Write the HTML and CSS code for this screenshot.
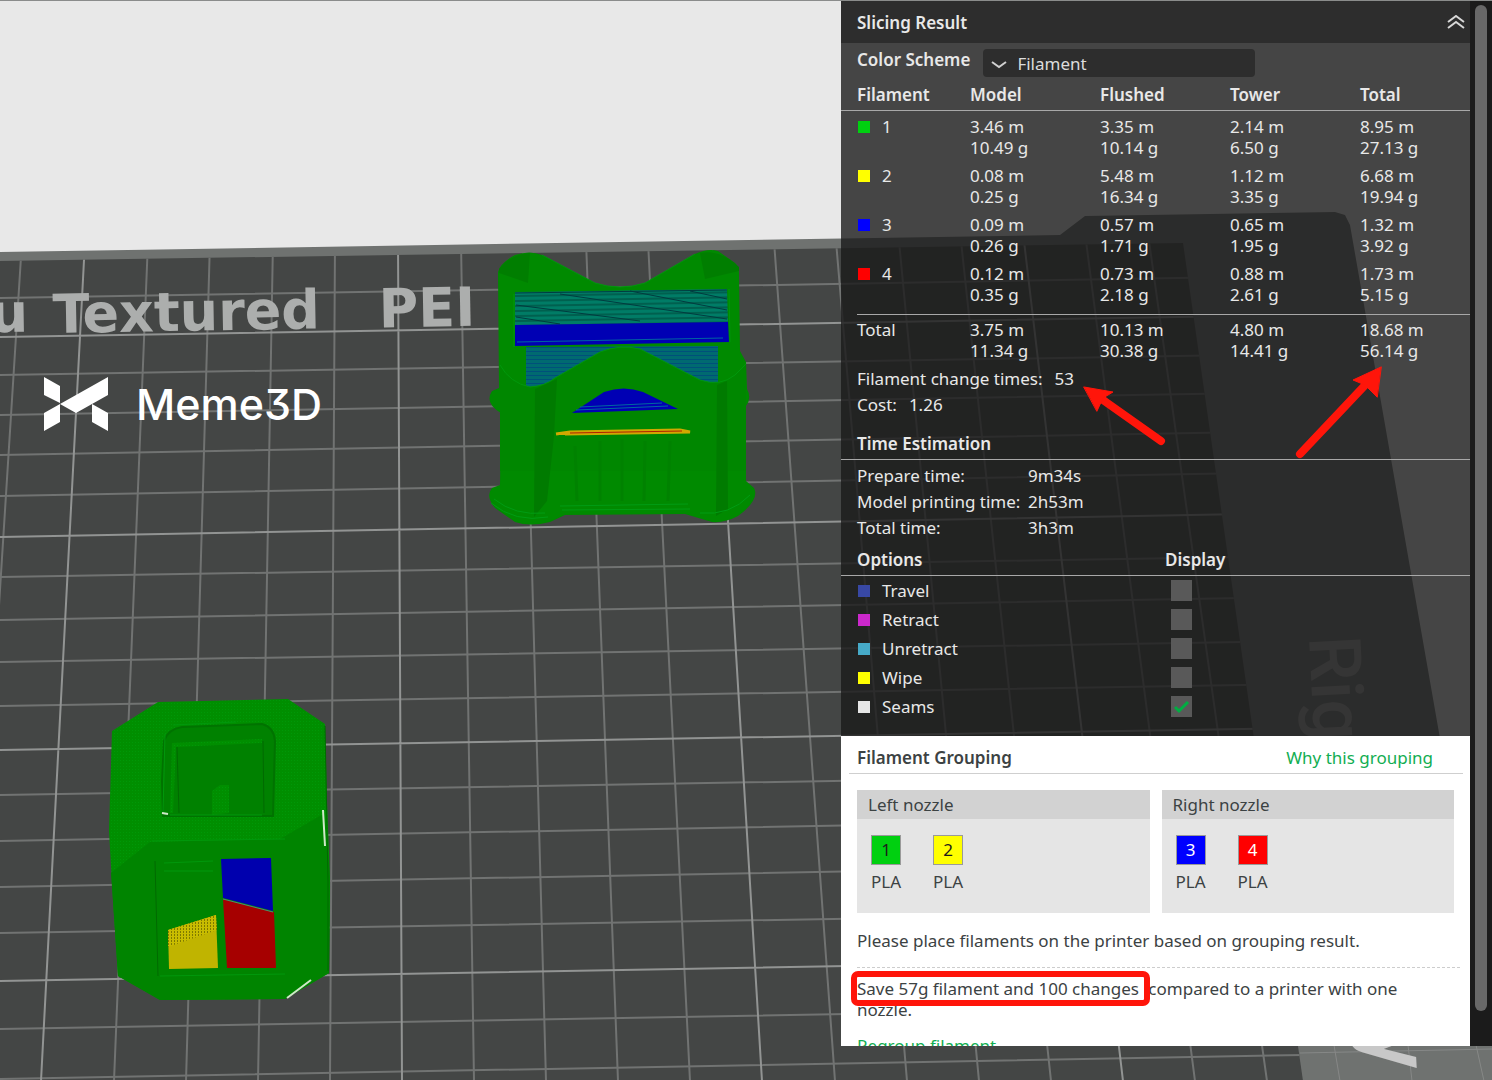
FILE: index.html
```html
<!DOCTYPE html>
<html lang="en">
  <head>
    <meta charset="UTF-8" />
    <meta name="viewport" content="width=device-width, initial-scale=1.0" />
    <title>Slicing Result</title>
    <link rel="stylesheet" href="styles.css">
  </head>
  <body>
    <div class="app">
      <!-- 3D view -->
      <svg class="scene" viewBox="0 0 1492 1080" preserveAspectRatio="xMaxYMin slice" aria-hidden="true">
        <defs>
          <clipPath id="plate-clip">
            <polygon points="0,260 1183,242 1303,1080 0,1080" />
          </clipPath>
          <pattern id="teal-lines" width="120" height="5" patternUnits="userSpaceOnUse" patternTransform="rotate(-1)">
            <rect width="120" height="5" fill="#007c66" />
            <rect y="3" width="120" height="2" fill="#00604f" />
          </pattern>
          <pattern id="blue-lines" width="60" height="4" patternUnits="userSpaceOnUse">
            <rect width="60" height="4" fill="#006a70" />
            <rect y="2" width="60" height="1" fill="#00507a" />
          </pattern>
          <pattern id="green-dots" width="3" height="3" patternUnits="userSpaceOnUse">
            <rect width="3" height="3" fill="#008e00" />
            <rect width="1" height="1" fill="#009808" />
          </pattern>
          <pattern id="yellow-dots" width="3" height="3" patternUnits="userSpaceOnUse">
            <rect width="3" height="3" fill="#c8bc00" />
            <rect width="1" height="2" fill="#7f7a00" />
          </pattern>
        </defs>

        <rect width="1492" height="1080" fill="#e8e8e8" />
        <polygon points="0,251 1060,234 1085,215 1335,211 1345,214 1350,224 1492,1034 1492,1080 0,1080" fill="#6f7270" />
        <polygon points="0,260 1183,242 1303,1080 0,1080" fill="#444645" />

        <g clip-path="url(#plate-clip)" fill="none" stroke-width="2">
          <path stroke="#717372" d="M0 297L1303 275M0 374L1303 353M0 414L1303 391M0 454L1303 430M0 495L1303 471M0 576L1303 555M0 619L1303 596M0 661L1303 640M0 705L1303 683M0 794L1303 772M0 840L1303 816M0 886L1303 862M0 932L1303 910M0 1028L1303 1005M0 1078L1303 1054" />
          <path stroke="#717372" d="M22 240L-31 1080M148 240L114 1080M210 240L186 1080M273 240L258 1080M335 240L330 1080M461 240L474 1080M523 240L546 1080M586 240L618 1080M648 240L690 1080M774 240L835 1080M836 240L907 1080M899 240L979 1080M961 240L1051 1080M1086 240L1195 1080M1149 240L1267 1080" />
          <path stroke="#929493" d="M0 336L1303 314M0 536L1303 512M0 749L1303 727M0 980L1303 957M85 240L41 1080M398 240L402 1080M711 240L762 1080M1024 240L1123 1080" />
        </g>
        <path d="M1334 1044L1340 1080M1408 1044L1412 1080M1476 1044L1484 1080M1300 1052L1492 1048" fill="none" stroke="#868887" />

        <g class="plate-text" transform="rotate(-1 0 331)">
          <text x="-10" y="331">u</text>
          <text x="53" y="333">Textured</text>
          <text x="379" y="333">PEI</text>
        </g>
        <text class="side-text" transform="translate(1309 636) rotate(87)">Right</text>
        <text class="corner-text" transform="translate(1368 1027) rotate(87)">y</text>

        <!-- model at the back -->
        <g>
          <path fill="#008a00" d="M498 271Q500 262 515 254Q530 249 542 254L595 282Q620 290 645 282L695 253Q708 247 718 250L735 262Q739 266 739 272L740 350L746 361L747 388Q752 397 746 405L746 480L754 487Q760 499 738 515Q725 522 712 521L685 513L565 514L550 521Q530 526 515 521L495 507Q485 495 492 487L500 484L501 412Q484 402 492 390L499 387Z" />
          <path fill="#007e00" d="M499 272L528 282L530 252Q510 253 499 268ZM739 270L705 278L700 252Q720 248 739 266Z" />
          <polygon fill="url(#teal-lines)" points="515,291 727,288 728,322 515,325" />
          <path fill="none" stroke="#003c40" stroke-width="1" d="M515 292L727 289M516 304L640 320M560 293L727 318M630 290L727 309M690 290L727 298M516 316L560 323" />
          <polygon fill="#0000b4" points="515,324 728,321 729,341 515,345" />
          <path fill="none" stroke="#0064a0" d="M517 341L723 337" />
          <polygon fill="url(#blue-lines)" points="526,346 718,345 718,383 526,386" />
          <path fill="#008700" d="M500 364Q510 382 530 386Q545 385 555 377L600 351Q620 343 640 348L700 379Q720 386 735 374L746 363L746 470L500 470Z" />
          <path fill="none" stroke="#00980c" d="M500 364Q510 382 530 386Q545 385 555 377L600 351Q620 343 640 348L700 379Q720 386 735 374L746 363M514 293L514 346M729 288L730 341M542 254L595 282Q620 290 645 282L695 253" />
          <path fill="#007b00" d="M535 388L557 378L554 435L547 500L534 516ZM717 384L727 380L728 508L716 515Z" />
          <path fill="#0000b4" d="M572 412L604 391Q624 384 643 391L678 408Z" />
          <path fill="none" stroke="#0068a0" d="M576 409L668 405M580 406L662 402" />
          <path fill="none" stroke="#d0a800" stroke-width="3" d="M556 433L570 431L680 429L690 431L565 433" />
          <path fill="none" stroke="#b02000" d="M570 432L682 430" />
          <path fill="none" stroke="#008200" stroke-width="3" d="M575 445L577 500M600 440L600 500M622 438L622 500M645 440L644 500M670 440L668 500" />
          <path fill="none" stroke="#009c14" d="M560 505L688 503M562 509L690 508M494 498Q515 515 545 512M750 494Q730 515 700 512M491 502Q515 522 548 516" />
        </g>

        <!-- model at the front -->
        <g>
          <polygon fill="url(#green-dots)" points="158,701 288,698 325,723 327,800 330,880 329,972 285,998 160,999 118,975 113,900 109,830 112,730" />
          <polygon fill="#008400" points="111,872 150,841 280,838 325,812 330,880 329,972 285,998 160,999 118,975 113,900" />
          <path fill="#008100" stroke="#007300" stroke-width="2" d="M163 815L162 780L164 740Q168 728 182 726L262 723Q274 726 275 740L273 815Z" />
          <path fill="url(#green-dots)" d="M170 812L172 742L262 738L262 742L176 746L173 812ZM212 814L212 790L220 784L229 784L229 812Z" />
          <path fill="none" stroke="#006a00" d="M177 746L179 812M263 740L264 812M325 725L328 880L328 970M155 860L158 975" />
          <path fill="none" stroke="#00980c" d="M173 724L236 721M165 733L163 812M152 840L285 838M164 862L213 860M164 870L213 870M160 975L285 973M170 814L262 814" />
          <polygon fill="#0000ae" points="221,858 271,857 273,910 223,897" />
          <polygon fill="#a60000" points="223,898 274,911 276,967 227,967" />
          <path fill="none" stroke="#4a9070" d="M223 898L273 911" />
          <polygon fill="#c0b400" points="168,929 216,914 218,967 169,968" />
          <polygon fill="url(#yellow-dots)" points="168,929 216,914 217,929 168,946" />
          <path fill="none" stroke="#cfe8c8" stroke-width="2" d="M323 809L325 845M287 997L311 979M162 812L168 813" />
        </g>
      </svg>

      <main class="view">
        <div class="brand">
          <svg class="brand-logo" viewBox="0 0 64 54" aria-hidden="true">
            <path fill="#fff" d="M0 0L16 9V26L0 18ZM0 54V36L16 27V45ZM16 27L64 0V18L32 36ZM48 27L64 36V54L48 45Z" />
          </svg>
          <span class="brand-name">Meme3D</span>
        </div>
      </main>

      <aside class="sidebar">
        <div class="panel">
          <header class="panel-header">
            <h1>Slicing Result</h1>
            <button class="collapse-btn" type="button" aria-label="Collapse">
              <svg viewBox="0 0 18 14"><path d="M1 7L9 1L17 7M1 13L9 7L17 13" fill="none" stroke="#d8d8d8" stroke-width="2" /></svg>
            </button>
          </header>

          <section class="result">
            <div class="scheme">
              <label for="color-scheme">Color Scheme</label>
              <select id="color-scheme">
                <option>Filament</option>
              </select>
            </div>

            <table class="usage">
              <thead>
                <tr><th>Filament</th><th>Model</th><th>Flushed</th><th>Tower</th><th>Total</th></tr>
              </thead>
              <tbody>
                <tr>
                  <td><i class="swatch green"></i>1</td>
                  <td>3.46 m<br>10.49 g</td><td>3.35 m<br>10.14 g</td><td>2.14 m<br>6.50 g</td><td>8.95 m<br>27.13 g</td>
                </tr>
                <tr>
                  <td><i class="swatch yellow"></i>2</td>
                  <td>0.08 m<br>0.25 g</td><td>5.48 m<br>16.34 g</td><td>1.12 m<br>3.35 g</td><td>6.68 m<br>19.94 g</td>
                </tr>
                <tr>
                  <td><i class="swatch blue"></i>3</td>
                  <td>0.09 m<br>0.26 g</td><td>0.57 m<br>1.71 g</td><td>0.65 m<br>1.95 g</td><td>1.32 m<br>3.92 g</td>
                </tr>
                <tr>
                  <td><i class="swatch red"></i>4</td>
                  <td>0.12 m<br>0.35 g</td><td>0.73 m<br>2.18 g</td><td>0.88 m<br>2.61 g</td><td>1.73 m<br>5.15 g</td>
                </tr>
              </tbody>
              <tfoot>
                <tr>
                  <td>Total</td>
                  <td>3.75 m<br>11.34 g</td><td>10.13 m<br>30.38 g</td><td>4.80 m<br>14.41 g</td><td>18.68 m<br>56.14 g</td>
                </tr>
              </tfoot>
            </table>

            <div class="stats">
              <p><span>Filament change times:</span><span>53</span></p>
              <p><span>Cost:</span><span>1.26</span></p>
            </div>

            <h2>Time Estimation</h2>
            <dl class="times">
              <dt>Prepare time:</dt><dd>9m34s</dd>
              <dt>Model printing time:</dt><dd>2h53m</dd>
              <dt>Total time:</dt><dd>3h3m</dd>
            </dl>

            <h2 class="options-title"><span>Options</span><span>Display</span></h2>
            <div class="options">
              <label><i class="swatch travel"></i><span>Travel</span><input type="checkbox"></label>
              <label><i class="swatch retract"></i><span>Retract</span><input type="checkbox"></label>
              <label><i class="swatch unretract"></i><span>Unretract</span><input type="checkbox"></label>
              <label><i class="swatch yellow"></i><span>Wipe</span><input type="checkbox"></label>
              <label><i class="swatch seams"></i><span>Seams</span><input type="checkbox" checked></label>
            </div>
          </section>

          <section class="grouping">
            <div class="grouping-header">
              <h2>Filament Grouping</h2>
              <a href="#">Why this grouping</a>
            </div>
            <div class="nozzles">
              <div class="nozzle">
                <h3>Left nozzle</h3>
                <ul>
                  <li><b class="green">1</b>PLA</li>
                  <li><b class="yellow">2</b>PLA</li>
                </ul>
              </div>
              <div class="nozzle">
                <h3>Right nozzle</h3>
                <ul>
                  <li><b class="blue">3</b>PLA</li>
                  <li><b class="red">4</b>PLA</li>
                </ul>
              </div>
            </div>
            <p class="hint">Please place filaments on the printer based on grouping result.</p>
            <p class="saving"><mark>Save 57g filament and 100 changes</mark> compared to a printer with one nozzle.</p>
            <a class="regroup" href="#">Regroup filament</a>
          </section>
        </div>

        <div class="scrollbar"><div class="thumb"></div></div>

        <svg class="arrows" viewBox="0 0 320 100" aria-hidden="true">
          <g fill="#ff150a" stroke="#ff150a" stroke-linecap="round">
            <path stroke-width="8" d="M20 36L78 77M217 90L286 17" />
            <path stroke-width="1" d="M1 23L30 28L20 34L14 47ZM298 3L270 16L282 21L294 33Z" />
          </g>
        </svg>
      </aside>
    </div>
  </body>
</html>
```
FILE: styles.css
```css
* {
  box-sizing: border-box;
}
body {
  margin: 0;
  font-family: "Noto Sans", sans-serif;
  font-size: 17px;
  line-height: 21px;
}
h1, h2, h3, p, ul, dl, dd {
  margin: 0;
  padding: 0;
  font-size: 17px;
}
.app {
  position: relative;
  display: grid;
  grid-template-columns: 1fr 651px;
  height: 100vh;
  overflow: hidden;
  border-top: 1px solid #8a8c8b;
}

/* 3D view */
.scene {
  position: absolute;
  inset: 0;
  width: 100%;
  height: 100%;
}
.plate-text {
  font-family: "DejaVu Sans", sans-serif;
  font-weight: bold;
  font-size: 54px;
  fill: #acaead;
}
.side-text {
  font-family: Roboto, sans-serif;
  font-weight: 500;
  font-size: 72px;
  fill: #9c9c9c;
}
.corner-text {
  font-family: Roboto, sans-serif;
  font-weight: 500;
  font-size: 88px;
  fill: #c8c8c8;
}
.view {
  position: relative;
  padding: 376px 44px 0;
}
.brand {
  display: flex;
  align-items: center;
  gap: 28px;
}
.brand-logo {
  width: 64px;
  height: 54px;
}
.brand-name {
  font-family: Inter, sans-serif;
  font-size: 43px;
  font-weight: 500;
  line-height: 54px;
  font-feature-settings: "cv09";
  color: #fff;
}

/* right column */
.sidebar {
  position: relative;
  display: flex;
  height: calc(100vh - 35px);
}
.panel {
  flex: 1;
  overflow: hidden;
  color: #e8e8e8;
}
.panel-header {
  display: flex;
  justify-content: space-between;
  align-items: center;
  height: 42px;
  padding: 0 5px 0 16px;
  background: #2d2d2d;
}
.panel h1, .panel h2, .usage th, .scheme label {
  font-weight: 600;
}
.collapse-btn {
  padding: 0;
  border: 0;
  background: none;
  cursor: pointer;
}
.collapse-btn svg {
  display: block;
  width: 18px;
  height: 14px;
}
.result {
  background: rgba(25, 25, 25, 0.79);
  padding-bottom: 15px;
}
.scheme {
  display: flex;
  gap: 13px;
  padding: 6px 16px 0;
}
.scheme select {
  appearance: none;
  width: 272px;
  height: 28px;
  padding: 0 34px;
  border: 0;
  border-radius: 4px;
  font: inherit;
  color: #dcdcdc;
  background: #2d2d2d url("data:image/svg+xml,%3Csvg xmlns='http://www.w3.org/2000/svg' width='16' height='8'%3E%3Cpath d='M1 1L8 6L15 1' fill='none' stroke='%23d0d0d0' stroke-width='2'/%3E%3C/svg%3E") no-repeat 8px 12px;
}
.usage {
  width: 100%;
  table-layout: fixed;
  border-collapse: collapse;
}
.usage th {
  width: 130px;
  padding: 7px 0 5px;
  text-align: left;
  border-bottom: 1px solid #a8a8a8;
}
.usage th:first-child {
  width: 129px;
}
.usage th:last-child {
  width: 110px;
}
.usage td {
  padding: 0 0 7px;
  vertical-align: top;
}
.usage th:first-child, .usage td:first-child {
  padding-left: 16px;
}
.usage tbody tr:first-child td {
  padding-top: 5px;
}
.usage tbody tr:last-child td {
  padding-bottom: 9px;
}
.usage tfoot td {
  padding: 5px 0;
  background: linear-gradient(#a8a8a8, #a8a8a8) no-repeat 0 0 / 100% 1px;
}
.usage tfoot td:first-child {
  background-position: 16px 0;
}
.swatch {
  display: inline-block;
  width: 12px;
  height: 12px;
  margin: 0 12px 0 1px;
}
.green { background: #00d010; }
.yellow { background: #ffff00; }
.blue { background: #0000ff; }
.red { background: #ff0000; }
.travel { background: #3848a4; }
.retract { background: #cc28cc; }
.unretract { background: #46aac8; }
.seams { background: #e6e6e6; }
.stats {
  padding: 0 16px 15px;
}
.stats p {
  display: flex;
  gap: 12px;
  line-height: 26px;
}
.result h2 {
  padding: 0 16px 5px;
  border-bottom: 1px solid #a8a8a8;
}
.times {
  display: grid;
  grid-template-columns: 171px 1fr;
  padding: 3px 16px 8px;
  line-height: 26px;
}
.result .options-title, .options label {
  display: grid;
}
.result .options-title {
  grid-template-columns: 308px 1fr;
}
.options label {
  grid-template-columns: 25px 289px 1fr;
  align-items: center;
  height: 29px;
  padding: 0 16px;
}
.options input {
  appearance: none;
  width: 21px;
  height: 21px;
  margin: 0;
  background: #595959;
}
.options input:checked {
  background: #595959 url("data:image/svg+xml,%3Csvg xmlns='http://www.w3.org/2000/svg' width='21' height='21'%3E%3Cpath d='M4 11L8 15L17 6' fill='none' stroke='%2300ae42' stroke-width='3'/%3E%3C/svg%3E");
}

/* grouping card */
.grouping {
  height: 400px;
  background: #fff;
  color: #3c4243;
  padding: 0 7px 0 8px;
}
.grouping a {
  color: #12ae52;
  text-decoration: none;
}
.grouping-header {
  display: flex;
  justify-content: space-between;
  padding: 11px 30px 5px 8px;
  border-bottom: 1px solid #cfcfcf;
}
.nozzles {
  display: grid;
  grid-template-columns: 1fr 1fr;
  gap: 12px;
  padding: 16px 9px 0 8px;
}
.nozzle {
  height: 123px;
  background: #e5e5e5;
}
.nozzle h3 {
  padding: 4px 11px;
  font-weight: 400;
  background: #d2d2d2;
}
.nozzle ul {
  display: flex;
  gap: 28px;
  padding: 16px 14px;
  list-style: none;
}
.nozzle li {
  width: 34px;
}
.nozzle b {
  display: block;
  width: 30px;
  height: 30px;
  margin-bottom: 6px;
  border: 1px solid #9a9a9a;
  font-weight: 400;
  line-height: 28px;
  text-align: center;
  color: #1c1c1c;
}
.nozzle .blue, .nozzle .red {
  color: #fff;
}
.hint {
  margin: 0 3px 0 8px;
  padding: 17px 0 16px;
  border-bottom: 1px dashed #cdcdcd;
}
.saving {
  padding: 10px 40px 15px 8px;
}
.saving mark {
  position: relative;
  padding-right: 5px;
  color: inherit;
  background: none;
  outline: 6px solid #ff150a;
  border-radius: 1px;
}
.regroup {
  padding-left: 8px;
}

.scrollbar {
  width: 22px;
  padding: 4px 5px;
  background: #1b1b1b;
}
.thumb {
  height: calc(100% - 31px);
  border-radius: 6px;
  background: #686868;
}
.arrows {
  position: absolute;
  top: 363px;
  left: 242px;
  width: 320px;
  height: 100px;
}
```
